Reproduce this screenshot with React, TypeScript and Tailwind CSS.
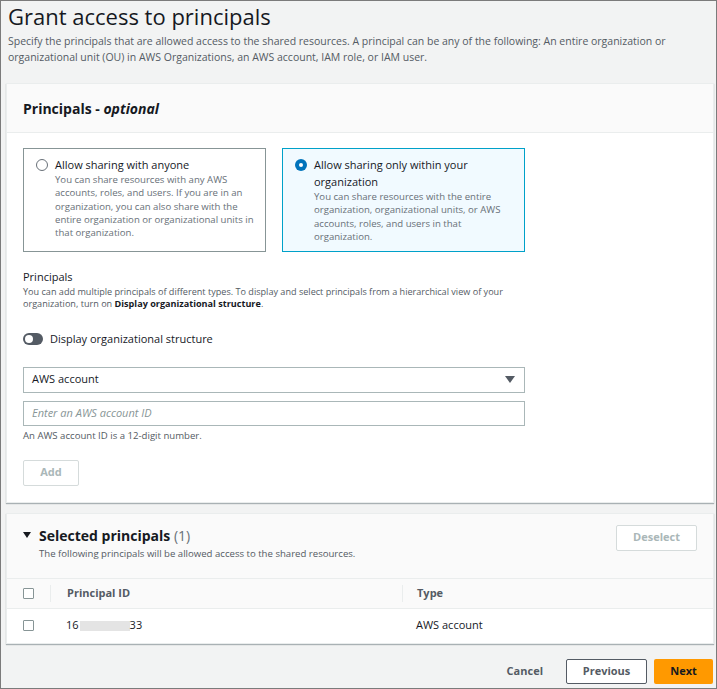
import React from "react";

const font = { fontFamily: '"Open Sans", "Noto Sans", Arial, sans-serif' };

function Radio({ checked }: { checked: boolean }) {
  return checked ? (
    <span className="mt-[3px] flex h-[12px] w-[12px] shrink-0 items-center justify-center rounded-full bg-[#0073bb]">
      <span className="h-[4px] w-[4px] rounded-full bg-white" />
    </span>
  ) : (
    <span className="mt-[3px] h-[12px] w-[12px] shrink-0 rounded-full border border-[#687078] bg-white" />
  );
}

function Checkbox() {
  return <span className="block h-[11px] w-[11px] rounded-[1px] border border-[#879596] bg-white" />;
}

export default function App() {
  return (
    <div
      style={font}
      className="flex h-[689px] w-[717px] flex-col border border-[#7b7b7b] bg-[#f2f3f3] text-[#16191f]"
    >
      <div className="px-[7px] pt-[1px]">
        <h1 className="text-[22px] leading-[28px] text-[#16191f]">Grant access to principals</h1>
        <p className="mt-[3px] text-[10.5px] leading-[16px] text-[#545b64]">
          Specify the principals that are allowed access to the shared resources. A principal can be any of the following: An entire organization or organizational unit (OU) in AWS Organizations, an AWS account, IAM role, or IAM user.
        </p>
      </div>

      <div className="ml-[5px] mr-[2px] mt-[18px] border border-[#eaeded] bg-white shadow-[0_1px_1px_0_rgba(0,28,36,0.3)]">
        <div className="flex h-[49px] items-center border-b border-[#eaeded] bg-[#fafafa] px-[16px]">
          <h2 className="text-[14px] font-bold">
            Principals - <i>optional</i>
          </h2>
        </div>
        <div className="px-[16px] pb-[16px] pt-[15px]">
          <div className="flex gap-[16px]">
            <div className="flex h-[104px] w-[243px] gap-[7px] border border-[#879596] pl-[12px] pr-[6px] pt-[7px]">
              <Radio checked={false} />
              <div>
                <div className="text-[11px] leading-[17px] text-[#16191f]">Allow sharing with anyone</div>
                <div className="text-[9.6px] leading-[13.3px] text-[#687078]">
                  You can share resources with any AWS accounts, roles, and users. If you are in an organization, you can also share with the entire organization or organizational units in that organization.
                </div>
              </div>
            </div>
            <div className="flex h-[104px] w-[243px] gap-[7px] border border-[#00a1c9] bg-[#f1faff] pl-[12px] pr-[10px] pt-[7px]">
              <Radio checked />
              <div>
                <div className="text-[11px] leading-[17px] text-[#16191f]">Allow sharing only within your organization</div>
                <div className="text-[9.6px] leading-[13.3px] text-[#687078]">
                  You can share resources with the entire organization, organizational units, or AWS accounts, roles, and users in that organization.
                </div>
              </div>
            </div>
          </div>

          <div className="mt-[16px] text-[11px] leading-[18px] text-[#16191f]">Principals</div>
          <div className="w-[500px] text-[9.1px] leading-[12px] text-[#545b64]">
            You can add multiple principals of different types. To display and select principals from a hierarchical view of your organization, turn on{" "}
            <b className="text-[#16191f]">Display organizational structure</b>.
          </div>

          <div className="mt-[21px] flex items-center gap-[7px]">
            <span className="flex h-[12px] w-[20px] items-center rounded-full bg-[#545b64] px-[2px]">
              <span className="h-[8px] w-[8px] rounded-full bg-white" />
            </span>
            <span className="text-[11px] text-[#16191f]">Display organizational structure</span>
          </div>

          <div className="mt-[19px] flex h-[26px] w-[502px] items-center justify-between border border-[#aab7b8] px-[8px]">
            <span className="text-[11px] text-[#16191f]">AWS account</span>
            <svg width="10" height="8" viewBox="0 0 10 8" className="mr-[1px]">
              <path d="M0 0 H10 L5 7 Z" fill="#545b64" />
            </svg>
          </div>
          <div className="mt-[8px] flex h-[25px] w-[502px] items-center border border-[#aab7b8] px-[8px]">
            <span className="text-[11px] italic text-[#879596]">Enter an AWS account ID</span>
          </div>
          <div className="mt-[3px] text-[9.6px] leading-[14px] text-[#545b64]">An AWS account ID is a 12-digit number.</div>

          <div className="mt-[17px] flex h-[26px] w-[56px] items-center justify-center rounded-[2px] border border-[#d5dbdb] text-[11px] font-bold text-[#aab7b8]">
            Add
          </div>
        </div>
      </div>

      <div className="ml-[5px] mr-[2px] mt-[10px] border border-[#eaeded] bg-white shadow-[0_1px_1px_0_rgba(0,28,36,0.3)]">
        <div className="flex h-[64px] justify-between bg-[#fafafa] px-[16px] pt-[11px]">
          <div>
            <div className="flex items-center gap-[8px]">
              <svg width="8" height="7" viewBox="0 0 8 7">
                <path d="M0 0 H8 L4 6 Z" fill="#16191f" />
              </svg>
              <span className="text-[14px] font-bold leading-[22px]">
                Selected principals <span className="font-normal text-[#687078]">(1)</span>
              </span>
            </div>
            <div className="ml-[16px] text-[9.6px] leading-[14px] text-[#545b64]">
              The following principals will be allowed access to the shared resources.
            </div>
          </div>
          <div className="flex h-[26px] w-[81px] items-center justify-center rounded-[2px] border border-[#d5dbdb] bg-white text-[11px] font-bold text-[#aab7b8]">
            Deselect
          </div>
        </div>
        <div className="flex h-[31px] items-center border-t border-b border-[#eaeded] bg-[#fafafa] text-[11px] font-bold text-[#545b64]">
          <div className="flex w-[43px] pl-[16px]">
            <Checkbox />
          </div>
          <div className="h-[17px] w-px bg-[#eaeded]" />
          <div className="w-[351px] pl-[16px]">Principal ID</div>
          <div className="h-[17px] w-px bg-[#eaeded]" />
          <div className="pl-[14px]">Type</div>
        </div>
        <div className="flex h-[34px] items-center text-[11px] text-[#16191f]">
          <div className="flex w-[43px] pl-[16px]">
            <Checkbox />
          </div>
          <div className="flex w-[352px] items-center pl-[16px]">
            <span>16</span>
            <span className="ml-[1px] h-[10px] w-[50px] bg-[#e4e4e4]" />
            <span>33</span>
          </div>
          <div className="pl-[14px]">AWS account</div>
        </div>
      </div>

      <div className="mt-[15px] flex items-center justify-end gap-[7px] pr-[3px]">
        <span className="mr-[16px] text-[11px] font-bold text-[#545b64]">Cancel</span>
        <div className="flex h-[25px] w-[81px] items-center justify-center rounded-[2px] border border-[#545b64] bg-white text-[11px] font-bold text-[#545b64]">
          Previous
        </div>
        <div className="flex h-[25px] w-[59px] items-center justify-center rounded-[2px] bg-[#ff9900] text-[11px] font-bold text-[#16191f]">
          Next
        </div>
      </div>
    </div>
  );
}
